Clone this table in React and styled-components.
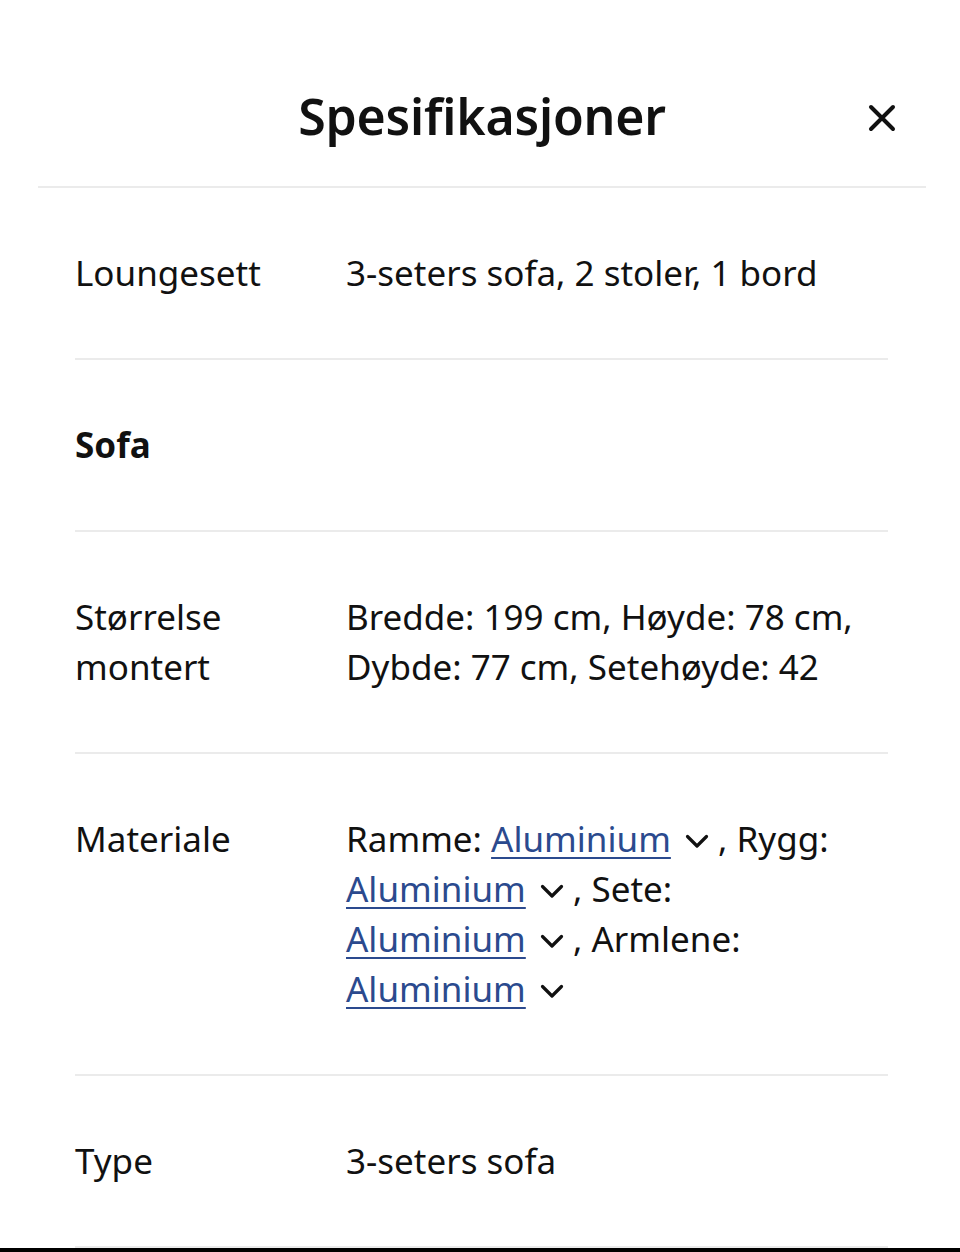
import React from "react";
import styled, { createGlobalStyle } from "styled-components";

const Global = createGlobalStyle`
  html, body { margin: 0; padding: 0; background: #fff; }
  body {
    font-family: "Noto Sans", "Open Sans", "Liberation Sans", sans-serif;
    color: #111;
    -webkit-font-smoothing: antialiased;
  }
  * { box-sizing: border-box; }
`;

const Page = styled.div`
  width: 960px;
  min-height: 1252px;
  display: flex;
  flex-direction: column;
  background: #fff;
`;

const Header = styled.header`
  height: 188px;
  margin: 0 34px 0 38px;
  padding-top: 46px;
  border-bottom: 2px solid #ebebeb;
  display: grid;
  grid-template-columns: 1fr auto 1fr;
  align-items: center;
`;

const Title = styled.h1`
  grid-column: 2;
  margin: 0;
  font-size: 50px;
  font-weight: 600;
  line-height: 60px;
  letter-spacing: -0.2px;
  color: #111;
`;

const CloseButton = styled.button`
  grid-column: 3;
  justify-self: end;
  margin-right: 28px;
  margin-top: 4px;
  width: 32px;
  height: 32px;
  padding: 0;
  border: none;
  background: transparent;
  display: flex;
  align-items: center;
  justify-content: center;
  cursor: pointer;
`;

const List = styled.dl`
  margin: 0 72px 0 75px;
  flex: 1;
`;

const Row = styled.div`
  display: grid;
  grid-template-columns: 271px 1fr;
  padding: 60px 0;
  border-bottom: 2px solid #ebebeb;
  font-size: 35px;
  line-height: 50px;
`;

const Label = styled.dt`
  margin: 0;
  font-weight: ${(p) => (p.$heading ? 700 : 400)};
  color: #111;
`;

const Value = styled.dd`
  margin: 0;
  color: #111;
`;

const MaterialItem = styled.span`
  display: inline-block;
  white-space: nowrap;
`;

const MaterialLink = styled.a`
  color: #2b4a8e;
  text-decoration: underline;
  text-decoration-thickness: 2px;
  text-underline-offset: 5px;
  cursor: pointer;
`;

const ChevronIcon = styled.svg`
  display: inline-block;
  width: 24px;
  height: 24px;
  margin-left: 5px;
  vertical-align: -1px;
`;

const BottomBar = styled.div`
  height: 4px;
  background: #000;
`;

const Chevron = () => (
  <ChevronIcon viewBox="0 0 24 24" fill="none" stroke="#111" strokeWidth="3.2" strokeLinecap="round" strokeLinejoin="round">
    <path d="M2.5 7.5l9.5 9.5 9.5-9.5" />
  </ChevronIcon>
);

const Material = () => (
  <MaterialItem>
    <MaterialLink>Aluminium</MaterialLink> <Chevron />
  </MaterialItem>
);

export default function App() {
  return (
    <Page>
      <Global />
      <Header>
        <Title>Spesifikasjoner</Title>
        <CloseButton aria-label="Lukk">
          <svg width="28" height="28" viewBox="0 0 28 28" fill="none" stroke="#111" strokeWidth="4" strokeLinecap="round">
            <path d="M3 3l22 22M25 3L3 25" />
          </svg>
        </CloseButton>
      </Header>
      <List>
        <Row>
          <Label>Loungesett</Label>
          <Value>3-seters sofa, 2 stoler, 1 bord</Value>
        </Row>
        <Row>
          <Label $heading>Sofa</Label>
          <Value />
        </Row>
        <Row>
          <Label>Størrelse montert</Label>
          <Value>Bredde: 199 cm, Høyde: 78 cm, Dybde: 77 cm, Setehøyde: 42</Value>
        </Row>
        <Row>
          <Label>Materiale</Label>
          <Value>
            Ramme: <Material /> , Rygg: <Material /> , Sete: <Material /> , Armlene: <Material />
          </Value>
        </Row>
        <Row>
          <Label>Type</Label>
          <Value>3-seters sofa</Value>
        </Row>
      </List>
      <BottomBar />
    </Page>
  );
}
